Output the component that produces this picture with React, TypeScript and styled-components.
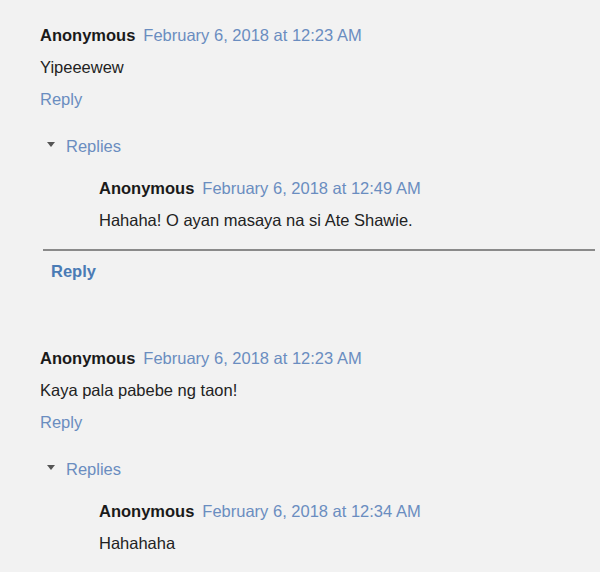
import React from "react";
import styled, { createGlobalStyle } from "styled-components";

const Global = createGlobalStyle`
  html, body { margin: 0; padding: 0; background: #f2f2f2; }
  body { font-family: "Liberation Sans", Arial, sans-serif; }
`;

const Page = styled.div`
  width: 600px;
  height: 572px;
  overflow: hidden;
  box-sizing: border-box;
  padding: 19px 5px 0 40px;
  background: #f2f2f2;
  font-size: 16.5px;
  color: #222;
`;

const Comment = styled.div`
  & + & { margin-top: 55px; }
`;

const Header = styled.div`
  line-height: 32px;
  white-space: nowrap;
`;

const Author = styled.span`
  font-weight: bold;
  color: #1a1a1a;
`;

const DateLink = styled.a`
  margin-left: 8px;
  color: #6a8dc0;
  text-decoration: none;
`;

const Body = styled.div`
  line-height: 32px;
  color: #222;
`;

const ReplyLink = styled.a`
  display: block;
  line-height: 32px;
  color: #6a8dc0;
  text-decoration: none;
`;

const Thread = styled.div`
  margin-top: 15px;
`;

const Toggle = styled.div`
  display: flex;
  align-items: center;
  gap: 11px;
  padding-left: 7px;
  line-height: 32px;
  color: #6a8dc0;
`;

const Triangle = styled.span`
  width: 0;
  height: 0;
  margin-top: -3px;
  border-left: 4px solid transparent;
  border-right: 4px solid transparent;
  border-top: 5px solid #555;
`;

const Nested = styled.div`
  margin: 10px 0 0 59px;
`;

const Divider = styled.div`
  margin: 13px 0 0 3px;
  height: 2px;
  background: #8a8a8a;
`;

const ThreadReply = styled.a`
  display: block;
  margin: 4px 0 0 11px;
  line-height: 32px;
  font-weight: bold;
  color: #4a7bb5;
  text-decoration: none;
`;

type Reply = { date: string; text: string };
type Data = { date: string; text: string; replies: Reply[]; closed?: boolean };

const comments: Data[] = [
  {
    date: "February 6, 2018 at 12:23 AM",
    text: "Yipeeewew",
    replies: [{ date: "February 6, 2018 at 12:49 AM", text: "Hahaha! O ayan masaya na si Ate Shawie." }],
    closed: true,
  },
  {
    date: "February 6, 2018 at 12:23 AM",
    text: "Kaya pala pabebe ng taon!",
    replies: [{ date: "February 6, 2018 at 12:34 AM", text: "Hahahaha" }],
  },
];

export default function App() {
  return (
    <>
      <Global />
      <Page>
        {comments.map((c, i) => (
          <Comment key={i}>
            <Header>
              <Author>Anonymous</Author>
              <DateLink>{c.date}</DateLink>
            </Header>
            <Body>{c.text}</Body>
            <ReplyLink>Reply</ReplyLink>
            <Thread>
              <Toggle>
                <Triangle />
                <span>Replies</span>
              </Toggle>
              {c.replies.map((r, j) => (
                <Nested key={j}>
                  <Header>
                    <Author>Anonymous</Author>
                    <DateLink>{r.date}</DateLink>
                  </Header>
                  <Body>{r.text}</Body>
                </Nested>
              ))}
              {c.closed && (
                <>
                  <Divider />
                  <ThreadReply>Reply</ThreadReply>
                </>
              )}
            </Thread>
          </Comment>
        ))}
      </Page>
    </>
  );
}
